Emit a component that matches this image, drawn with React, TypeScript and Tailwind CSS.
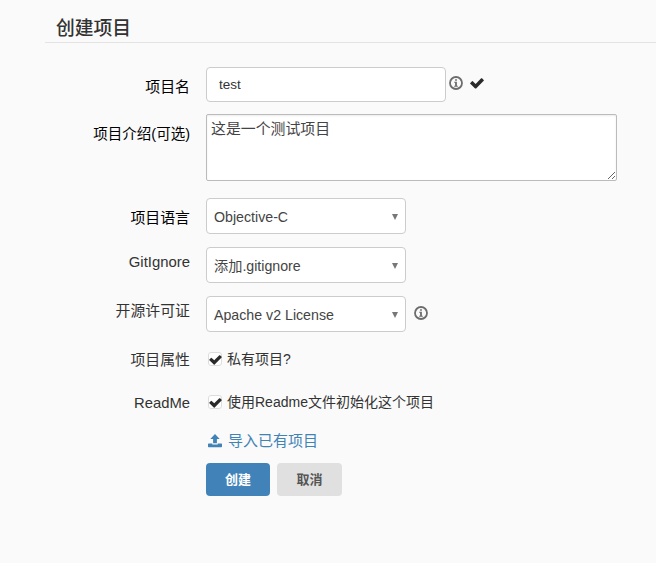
import { useState } from 'react';
import type { ReactNode } from 'react';

function CheckIcon({ className }: { className: string }) {
  return (
    <svg viewBox="0 0 14 11" className={`shrink-0 text-[#2a2a2a] ${className}`} fill="currentColor">
      <path d="M11.2.3Q11.6 0 12 .3l1.7 1.7q.4.4 0 .8L6.1 10.4q-.5.4-1 0L.3 5.8q-.4-.4 0-.8L2 3.3q.4-.4.8 0l2.8 2.6z" />
    </svg>
  );
}

function InfoIcon({ className }: { className: string }) {
  return (
    <svg viewBox="0 0 14 14" className={`h-3.5 w-3.5 shrink-0 text-[#6c6c6c] ${className}`} fill="none">
      <circle cx="7" cy="7" r="6" stroke="currentColor" strokeWidth="1.8" />
      <path d="M6.1 3.2h1.8v1.5H6.1zM5.2 5.7h2.7v4h.9v1H5.2v-1h.9v-3h-.9z" fill="currentColor" />
    </svg>
  );
}

function UploadIcon() {
  return (
    <svg viewBox="0 0 14 14" className="h-3.5 w-3.5 shrink-0" fill="currentColor">
      <path d="M7 0l4.7 4.9H8.9v4.3H5.1V4.9H2.3z" />
      <path d="M.7 9.4h3.6v1.2h5.4V9.4h3.6q.7 0 .7.7v2.5q0 .7-.7.7H.7q-.7 0-.7-.7v-2.5q0-.7.7-.7z" />
    </svg>
  );
}

function Row({
  label,
  className,
  labelClass,
  children,
}: {
  label: string;
  className: string;
  labelClass: string;
  children: ReactNode;
}) {
  return (
    <div className={`flex ${className}`}>
      <label className={`mr-4 w-[190px] shrink-0 text-right leading-5 ${labelClass}`}>{label}</label>
      {children}
    </div>
  );
}

function SelectBox({ value }: { value: string }) {
  return (
    <button
      type="button"
      className="flex h-9 w-[200px] items-center justify-between rounded-[4px] border border-[#ccc] bg-white pt-0.5 pr-[7px] pl-[7px] text-[14.2px] leading-5 text-[#444]"
    >
      <span>{value}</span>
      <svg viewBox="0 0 6 6" className="h-1.5 w-1.5" fill="#777">
        <path d="M0 0h6L3 6z" />
      </svg>
    </button>
  );
}

function CheckItem({ text }: { text: string }) {
  const [checked, setChecked] = useState(true);
  return (
    <button
      type="button"
      onClick={() => setChecked(!checked)}
      className="flex h-5 items-center text-sm leading-5 text-[#333]"
    >
      <span className="mr-[5px] ml-[2px] flex h-3.5 w-3.5 items-center justify-center rounded-[3px] border border-[#ddd] bg-white">
        {checked && <CheckIcon className="mt-0.5 h-2.5 w-[13px]" />}
      </span>
      <span>{text}</span>
    </button>
  );
}

export default function App() {
  const [name, setName] = useState('test');
  const [intro, setIntro] = useState('这是一个测试项目');

  return (
    <div className="h-[563px] w-[656px] overflow-hidden bg-[#fafafa] font-['Liberation_Sans','Noto_Sans_CJK_SC',sans-serif]">
      <h1 className="ml-[45px] h-[43px] border-b border-[#e4e4e4] pt-[17px] pl-[11px] text-[18.8px] leading-6 font-medium text-[#333]">
        创建项目
      </h1>

      <form>
        <Row label="项目名" className="mt-6" labelClass="pt-2.5 text-[14.9px] text-black">
          <input
            value={name}
            onChange={(e) => setName(e.target.value)}
            className="h-[35px] w-60 rounded-[4px] border border-[#ccc] bg-white px-3 text-[13.5px] text-[#333] outline-none"
          />
          <InfoIcon className="mt-[9px] ml-[3px]" />
          <CheckIcon className="mt-[11px] ml-[7px] h-[11px] w-3.5" />
        </Row>

        <Row label="项目介绍(可选)" className="mt-3" labelClass="pt-2.5 text-[14.5px] text-black">
          <textarea
            value={intro}
            onChange={(e) => setIntro(e.target.value)}
            className="h-[67px] w-[411px] rounded-[2px] border border-[#bbb] bg-white px-1 pt-1 text-[14.9px] leading-5 text-[#444] shadow-[inset_0_1px_2px_rgba(0,0,0,0.08)] outline-none"
          />
        </Row>

        <Row label="项目语言" className="mt-[17px]" labelClass="pt-2.5 text-[14.9px] text-black">
          <SelectBox value="Objective-C" />
        </Row>
        <Row label="GitIgnore" className="mt-[13px]" labelClass="pt-[5px] text-[14.9px] text-[#333]">
          <SelectBox value="添加.gitignore" />
        </Row>
        <Row label="开源许可证" className="mt-[13px]" labelClass="pt-[5px] text-[14.9px] text-[#333]">
          <SelectBox value="Apache v2 License" />
          <InfoIcon className="mt-2.5 ml-2" />
        </Row>

        <Row label="项目属性" className="mt-[17px]" labelClass="pt-px text-[14.9px] text-[#333]">
          <CheckItem text="私有项目?" />
        </Row>
        <Row label="ReadMe" className="mt-[22px]" labelClass="pt-px text-[14.8px] text-[#333]">
          <CheckItem text="使用Readme文件初始化这个项目" />
        </Row>

        <div className="mt-[18px] ml-[208px] flex h-5 items-center gap-1.5 text-[15px] leading-5 text-[#4183b5]">
          <UploadIcon />
          <a href="#import">导入已有项目</a>
        </div>

        <div className="mt-3 ml-[206px] flex gap-[7px] text-[13px] leading-5 font-bold">
          <button type="button" className="h-[33px] w-16 rounded-[4px] bg-[#4183b9] text-white">
            创建
          </button>
          <button type="button" className="h-[33px] w-[65px] rounded-[4px] bg-[#e0e0e0] text-[#555]">
            取消
          </button>
        </div>
      </form>
    </div>
  );
}
